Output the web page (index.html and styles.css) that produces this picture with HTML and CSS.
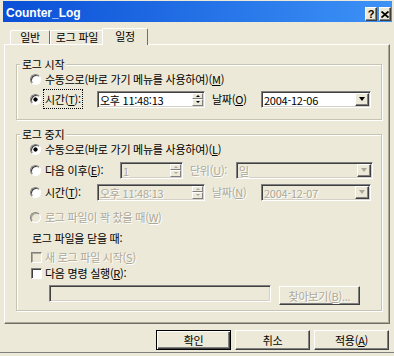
FILE: index.html
```html
<!DOCTYPE html>
<html lang="ko">
<head>
    <meta charset="UTF-8">
    <meta name="viewport" content="width=device-width, initial-scale=1.0">
    <title>Counter_Log</title>
    <link rel="stylesheet" href="styles.css">
</head>
<body>
    <div class="window">
        <div class="titlebar">
            <span class="title">Counter_Log</span>
            <div class="title-buttons">
                <span class="title-btn">?</span>
                <span class="title-btn">
                    <svg width="8" height="7" viewBox="0 0 8 7"><path d="M0.5 0.5 L7.5 6.5 M7.5 0.5 L0.5 6.5" stroke="#000" stroke-width="1.8" fill="none"/></svg>
                </span>
            </div>
        </div>

        <div class="content">
            <div class="tabs">
                <div class="tab tab-general">일반</div>
                <div class="tab tab-file">로그 파일</div>
                <div class="tab tab-schedule active">일정</div>
            </div>

            <div class="panel">
                <!-- log start -->
                <fieldset class="group">
                    <legend>로그 시작</legend>
                    <div class="row">
                        <span class="radio"></span>
                        <span>수동으로(바로 가기 메뉴를 사용하여)(<u>M</u>)</span>
                    </div>
                    <div class="row row-field">
                        <span class="radio checked"></span>
                        <span class="label label-time"><span class="focus">시간(<u>T</u>):</span></span>
                        <div class="field field-time">
                            <span class="field-text">오후 11:48:13</span>
                            <span class="spin"><span class="spin-up"></span><span class="spin-down"></span></span>
                        </div>
                        <span class="label label-date">날짜(<u>O</u>)</span>
                        <div class="field combo combo-date">
                            <span class="field-text">2004-12-06</span>
                            <span class="drop"></span>
                        </div>
                    </div>
                </fieldset>

                <!-- log stop -->
                <fieldset class="group group-stop">
                    <legend>로그 중지</legend>
                    <div class="row">
                        <span class="radio checked"></span>
                        <span>수동으로(바로 가기 메뉴를 사용하여)(<u>L</u>)</span>
                    </div>
                    <div class="row row-sub">
                        <span class="radio"></span>
                        <span class="label label-after">다음 이후(<u>E</u>):</span>
                        <div class="field field-count disabled">
                            <span class="field-text">1</span>
                            <span class="spin"><span class="spin-up"></span><span class="spin-down"></span></span>
                        </div>
                        <span class="label label-unit dim">단위(<u>U</u>):</span>
                        <div class="field combo combo-unit disabled">
                            <span class="field-text">일</span>
                            <span class="drop"></span>
                        </div>
                    </div>
                    <div class="row row-sub">
                        <span class="radio"></span>
                        <span class="label label-time">시간(<u>T</u>):</span>
                        <div class="field field-time disabled">
                            <span class="field-text">오후 11:48:13</span>
                            <span class="spin"><span class="spin-up"></span><span class="spin-down"></span></span>
                        </div>
                        <span class="label label-date dim">날짜(<u>N</u>)</span>
                        <div class="field combo combo-date disabled">
                            <span class="field-text">2004-12-07</span>
                            <span class="drop"></span>
                        </div>
                    </div>
                    <div class="row row-full">
                        <span class="radio disabled"></span>
                        <span class="dim">로그 파일이 꽉 찼을 때(<u>W</u>)</span>
                    </div>
                    <div class="row row-caption">
                        <span class="caption">로그 파일을 닫을 때:</span>
                    </div>
                    <div class="row row-check">
                        <span class="check disabled"></span>
                        <span class="dim">새 로그 파일 시작(<u>S</u>)</span>
                    </div>
                    <div class="row">
                        <span class="check"></span>
                        <span>다음 명령 실행(<u>R</u>):</span>
                    </div>
                    <div class="row row-command">
                        <div class="field field-command disabled"></div>
                        <div class="btn btn-browse dim">찾아보기(<u>B</u>)...</div>
                    </div>
                </fieldset>
            </div>

            <div class="buttons">
                <div class="btn default">확인</div>
                <div class="btn">취소</div>
                <div class="btn">적용(<u>A</u>)</div>
            </div>
        </div>
    </div>
</body>
</html>
```

FILE: styles.css
```css
* {
    box-sizing: border-box;
}

body {
    margin: 0;
    background-color: #ece9d8;
    font-family: "Noto Sans CJK KR", "Noto Sans", sans-serif;
    font-size: 11px;
    line-height: 14px;
    letter-spacing: -0.25px;
    color: #000;
}

u {
    text-underline-offset: 1px;
}

.window {
    width: 394px;
    height: 353px;
    padding: 1px 2px 0 3px;
    border-bottom: 1px solid #808080;
}

/* title bar */
.titlebar {
    display: flex;
    align-items: flex-end;
    justify-content: space-between;
    height: 21px;
    padding: 0 1px 1px 3px;
    background: linear-gradient(90deg, #0a4fd6, #3d92f6);
}

.title {
    padding-bottom: 1px;
    font-family: "Liberation Sans", Arial, sans-serif;
    font-size: 12px;
    font-weight: bold;
    letter-spacing: 0;
    color: #fff;
}

.title-buttons {
    display: flex;
    gap: 2px;
}

.title-btn {
    display: flex;
    align-items: center;
    justify-content: center;
    width: 12px;
    height: 14px;
    background-color: #ece9d8;
    border: 1px solid;
    border-color: #fff #404040 #404040 #fff;
    box-shadow: inset -1px -1px #808080;
    font-family: "Liberation Sans", Arial, sans-serif;
    font-size: 11px;
    font-weight: bold;
    line-height: 12px;
}

/* tabs */
.content {
    padding: 6px 2px 0 1px;
}

.tabs {
    display: flex;
    align-items: flex-end;
    height: 16px;
    padding-left: 6px;
}

.tab {
    height: 14px;
    border-top: 1px solid #fff;
    border-left: 1px solid #fff;
    border-right: 1px solid #716f64;
    border-radius: 2px 2px 0 0;
    text-align: center;
    line-height: 12px;
}

.tab-general {
    width: 40px;
}

.tab-file {
    width: 54px;
}

.tab-schedule {
    width: 46px;
}

.tab.active {
    position: relative;
    z-index: 1;
    height: 17px;
    margin-left: -2px;
    margin-bottom: -1px;
    background-color: #ece9d8;
    line-height: 14px;
}

.panel {
    height: 280px;
    padding: 12px 7px 0 11px;
    border: 1px solid;
    border-color: #fff #716f64 #716f64 #fff;
    box-shadow: inset -1px -1px #aca899;
}

/* group boxes */
.group {
    margin: 0;
    padding: 0 0 10px 0;
    min-width: 0;
    border: 1px solid #c7c4b4;
    box-shadow: inset 1px 1px #fff, 1px 1px #fff;
}

.group legend {
    margin-left: 3px;
    padding: 0 2px;
    line-height: 14px;
    background-color: #ece9d8;
}

.group-stop {
    margin-top: 7px;
    padding-bottom: 5px;
}

.row {
    display: flex;
    align-items: center;
    height: 16px;
    white-space: nowrap;
}

.row-field {
    height: 20px;
    margin-top: 2px;
}

.row-sub {
    height: 18px;
    margin-top: 4px;
}

.row-full {
    margin-top: 8px;
}

.row-caption {
    margin-top: 5px;
}

.row-check {
    margin-top: 3px;
}

.row-command {
    align-items: flex-start;
    height: 20px;
    margin-top: 4px;
}

.caption {
    margin-left: 15px;
}

.dim {
    color: #aca899;
    text-shadow: 1px 1px 0 #fff;
}

.focus {
    outline: 1px dotted #000;
    outline-offset: 1px;
}

/* radio and check */
.radio {
    flex: none;
    width: 11px;
    height: 11px;
    margin: 0 4px 0 13px;
    border-radius: 50%;
    border: 1px solid;
    border-color: #808080 #fff #fff #808080;
    background-color: #fff;
    box-shadow: inset 1px 1px #404040;
}

.radio.checked {
    background: radial-gradient(circle, #000 0 1.8px, #fff 2.4px);
}

.radio.disabled,
.check.disabled {
    background-color: #ece9d8;
    box-shadow: inset 1px 1px #aca899;
}

.check {
    flex: none;
    width: 11px;
    height: 11px;
    margin: 0 3px 0 14px;
    border: 1px solid;
    border-color: #808080 #fff #fff #808080;
    background-color: #fff;
    box-shadow: inset 1px 1px #404040;
}

/* labels before fields */
.label {
    flex: none;
}

.label-time {
    width: 52px;
}

.label-after {
    width: 75px;
}

.label-date {
    width: 49px;
    margin-left: 7px;
}

.label-unit {
    width: 46px;
    margin-left: 7px;
}

/* fields */
.field {
    display: flex;
    flex: none;
    height: 17px;
    padding: 0 1px 0 2px;
    background-color: #fff;
    border: 1px solid;
    border-color: #808080 #fff #fff #808080;
    box-shadow: inset 1px 1px #404040, inset -1px -1px #d4d0c8;
}

.field-text {
    padding-top: 1px;
    line-height: 14px;
}

.field.disabled {
    background-color: #ece9d8;
    color: #aca899;
    text-shadow: 1px 1px 0 #fff;
}

.field-time {
    width: 108px;
}

.field-count {
    width: 63px;
}

.combo-date {
    width: 110px;
}

.combo-unit {
    width: 137px;
}

.field-command {
    width: 222px;
    margin-left: 32px;
}

.spin {
    display: flex;
    flex-direction: column;
    width: 11px;
    margin: 1px 0 1px auto;
}

.spin-up,
.spin-down {
    display: flex;
    align-items: center;
    justify-content: center;
    flex: 1;
    background-color: #ece9d8;
    border: 1px solid;
    border-color: #fff #808080 #808080 #fff;
}

.spin-up::after {
    content: "";
    border-style: solid;
    border-width: 0 2px 2px;
    border-color: transparent transparent #000;
}

.spin-down::after {
    content: "";
    border-style: solid;
    border-width: 2px 2px 0;
    border-color: #000 transparent transparent;
}

.disabled .spin-up::after {
    border-bottom-color: #aca899;
}

.disabled .spin-down::after {
    border-top-color: #aca899;
}

.drop {
    display: flex;
    align-items: center;
    justify-content: center;
    width: 14px;
    margin: 1px 0 1px auto;
    background-color: #ece9d8;
    border: 1px solid;
    border-color: #fff #404040 #404040 #fff;
    box-shadow: inset -1px -1px #808080;
}

.drop::after {
    content: "";
    border-style: solid;
    border-width: 4px 3px 0;
    border-color: #000 transparent transparent;
}

.disabled .drop::after {
    border-top-color: #aca899;
}

/* push buttons */
.buttons {
    display: flex;
    justify-content: flex-end;
    gap: 4px;
    margin-top: 6px;
    padding-right: 1px;
}

.btn {
    display: flex;
    align-items: center;
    justify-content: center;
    width: 75px;
    height: 20px;
    background-color: #ece9d8;
    border: 1px solid;
    border-color: #fff #404040 #404040 #fff;
    box-shadow: inset -1px -1px #808080;
}

.btn.default {
    border-color: #000;
    box-shadow: inset 1px 1px #fff, inset -1px -1px #404040, inset -2px -2px #808080;
}

.btn-browse {
    width: 81px;
    height: 19px;
    margin: 1px 0 0 8px;
}
```
